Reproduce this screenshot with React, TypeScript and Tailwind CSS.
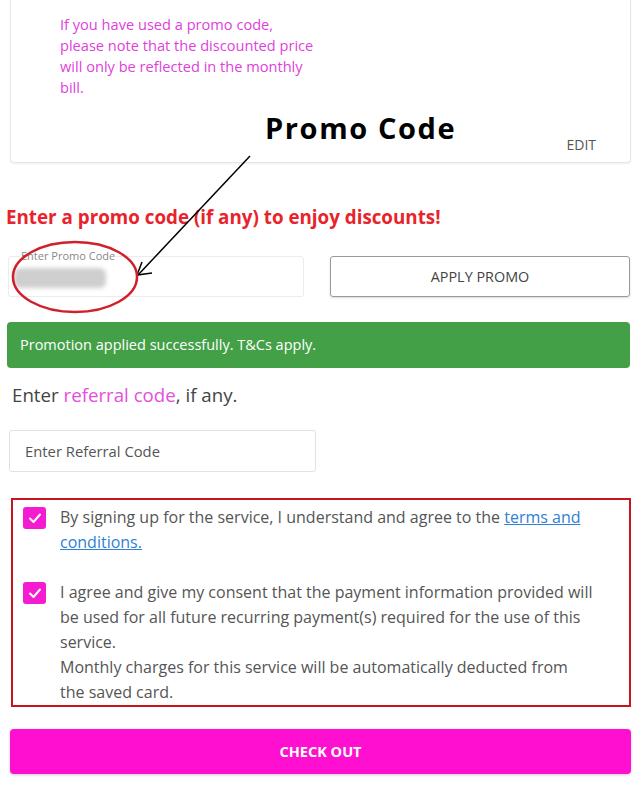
import React from "react";

const Check = () => (
  <span className="flex h-[22px] w-[23px] shrink-0 items-center justify-center rounded-[3px] bg-[#f51bd0]">
    <svg width="14" height="14" viewBox="0 0 14 14" fill="none">
      <path d="M2 7.5 L5.5 11 L12 3.5" stroke="white" strokeWidth="2" strokeLinecap="round" strokeLinejoin="round" />
    </svg>
  </span>
);

const App = () => {
  return (
    <div className="relative h-[787px] w-[641px] overflow-hidden bg-white font-['Open_Sans',sans-serif]">
      {/* summary card (top cut off) */}
      <div className="mx-[10px] flex h-[163px] flex-col rounded-b-[4px] border border-t-0 border-[#e6e6e6] shadow-[0_1px_2px_rgba(0,0,0,0.06)]">
        <p className="pl-[49px] pt-[14px] text-[14.6px] leading-[21px] text-[#e03fdc]">
          If you have used a promo code,
          <br />
          please note that the discounted price
          <br />
          will only be reflected in the monthly
          <br />
          bill.
        </p>
        <div className="mt-auto flex justify-end pb-[8px] pr-[34px] text-[14px] leading-[18px] text-[#555]">EDIT</div>
      </div>

      <h2 className="mt-[42px] pl-[6px] text-[18.8px] font-bold leading-[24px] text-[#e8232b]">
        Enter a promo code (if any) to enjoy discounts!
      </h2>

      {/* promo row */}
      <div className="mt-[27px] flex gap-[26px] pl-[8px]">
        <div className="relative h-[41px] w-[296px] rounded-[3px] border border-[#ececec]">
          <span className="absolute left-[11px] top-[-8px] bg-white px-[1px] text-[11px] leading-[13px] text-[#888]">
            Enter Promo Code
          </span>
          <div className="ml-[5px] mt-[11px] h-[20px] w-[92px] rounded-[6px] bg-[#cfcfcf] blur-[2px]" />
        </div>
        <button className="h-[41px] w-[300px] rounded-[3px] border border-[#9a9a9a] text-[14.4px] text-[#444] shadow-[0_1px_2px_rgba(0,0,0,0.15)]">
          APPLY PROMO
        </button>
      </div>

      <div className="mx-[7px] mt-[25px] flex h-[46px] w-[623px] items-center rounded-[4px] bg-[#43a047] pl-[13px] text-[14.5px] text-white">
        Promotion applied successfully. T&amp;Cs apply.
      </div>

      <p className="mt-[14px] pl-[12px] text-[18.7px] leading-[25px] text-[#444]">
        Enter <span className="text-[#e44fdc]">referral code</span>, if any.
      </p>

      <div className="ml-[9px] mt-[23px] flex h-[42px] w-[307px] items-center rounded-[3px] border border-[#e2e2e2] pl-[15px] text-[14.8px] text-[#555]">
        Enter Referral Code
      </div>

      {/* consent box */}
      <div className="ml-[11px] mt-[26px] h-[209px] w-[620px] border-2 border-[#c8161e] pl-[10px] pt-[5px] text-[16px] leading-[25px] text-[#555]">
        <div className="flex gap-[14px]">
          <div className="pt-[2px]">
            <Check />
          </div>
          <p className="w-[534px]">
            By signing up for the service, I understand and agree to the{" "}
            <span className="text-[#2f7fd6] underline">terms and conditions.</span>
          </p>
        </div>
        <div className="mt-[25px] flex gap-[14px]">
          <div className="pt-[2px]">
            <Check />
          </div>
          <p className="w-[534px]">
            I agree and give my consent that the payment information provided will be used for all future recurring
            payment(s) required for the use of this service.
            <br />
            Monthly charges for this service will be automatically deducted from the saved card.
          </p>
        </div>
      </div>

      <button className="ml-[10px] mt-[22px] h-[45px] w-[621px] rounded-[4px] bg-[#ff0fcf] text-[14.5px] font-bold text-white shadow-[0_1px_3px_rgba(0,0,0,0.2)]">
        CHECK OUT
      </button>

      {/* annotation overlay */}
      <span className="absolute left-[265px] top-[109px] text-[29px] font-bold leading-[38px] tracking-[1.6px] text-black">
        Promo Code
      </span>
      <svg className="pointer-events-none absolute left-0 top-0" width="641" height="787">
        <line x1="250" y1="156" x2="138" y2="275" stroke="black" strokeWidth="1.5" />
        <polyline points="142,262 137,275 152,273" fill="none" stroke="black" strokeWidth="1.5" />
        <ellipse cx="75" cy="277" rx="62" ry="35" fill="none" stroke="#d0202a" strokeWidth="2.5" />
      </svg>
    </div>
  );
};

export default App;
